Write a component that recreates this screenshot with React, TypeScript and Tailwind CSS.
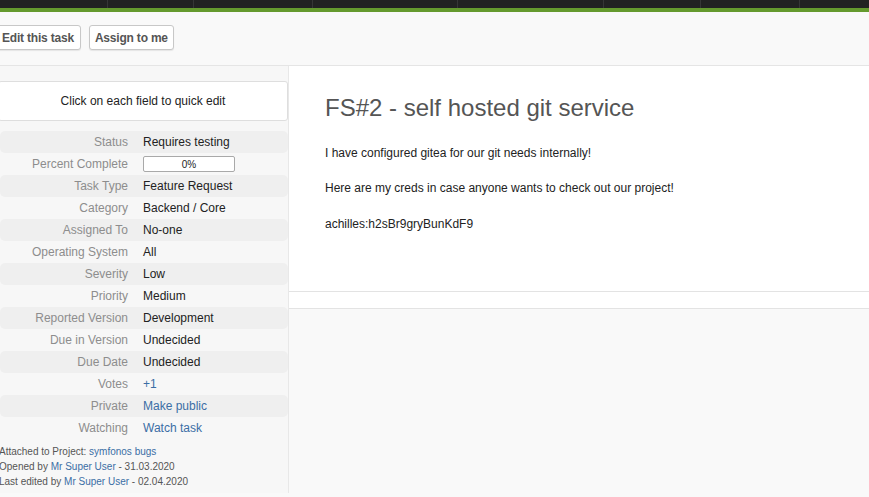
import React from 'react';

const navWidths = [107, 86, 119, 145, 146, 97, 99, 70];

interface Field {
  label: string;
  value: string;
  link?: boolean;
  progress?: boolean;
}

const fields: Field[] = [
  { label: 'Status', value: 'Requires testing' },
  { label: 'Percent Complete', value: '0%', progress: true },
  { label: 'Task Type', value: 'Feature Request' },
  { label: 'Category', value: 'Backend / Core' },
  { label: 'Assigned To', value: 'No-one' },
  { label: 'Operating System', value: 'All' },
  { label: 'Severity', value: 'Low' },
  { label: 'Priority', value: 'Medium' },
  { label: 'Reported Version', value: 'Development' },
  { label: 'Due in Version', value: 'Undecided' },
  { label: 'Due Date', value: 'Undecided' },
  { label: 'Votes', value: '+1', link: true },
  { label: 'Private', value: 'Make public', link: true },
  { label: 'Watching', value: 'Watch task', link: true },
];

export default function App() {
  return (
    <div className="w-[869px] h-[497px] overflow-hidden bg-[#f9f9f9] font-['Liberation_Sans',Arial,sans-serif] text-[12px] text-[#222]">
      {/* top nav */}
      <div className="flex h-[8px] bg-[#222]">
        {navWidths.map((w, i) => (
          <div key={i} className={`h-full shrink-0 ${i > 0 ? 'border-l border-[#363636]' : ''}`} style={{ width: w }} />
        ))}
      </div>
      <div className="h-[4px] bg-[#659a2e]" />

      {/* action buttons */}
      <div className="flex items-start gap-[8px] h-[54px] pt-[13px] border-b border-[#e5e5e5] -ml-[5px]">
        <button className="h-[25px] px-[6px] bg-white border border-[#c8c8c8] rounded-[3px] shadow-[0_1px_1px_rgba(0,0,0,0.08)] font-bold text-[#555] leading-none tracking-[-0.2px]">
          Edit this task
        </button>
        <button className="h-[25px] px-[5px] bg-white border border-[#c8c8c8] rounded-[3px] shadow-[0_1px_1px_rgba(0,0,0,0.08)] font-bold text-[#555] leading-none tracking-[-0.2px]">
          Assign to me
        </button>
      </div>

      <div className="flex">
        {/* left panel */}
        <div className="w-[289px] shrink-0 h-[427px] border-r border-[#e8e8e8] bg-[#f7f7f7]">
          <div className="mt-[15px] -ml-[2px] w-[290px] h-[40px] bg-white border border-[#dedede] rounded-[3px] flex items-center justify-center">
            Click on each field to quick edit
          </div>

          <div className="mt-[10px]">
            {fields.map((f, i) => (
              <div
                key={f.label}
                className={`flex items-center h-[22px] rounded-[5px] ${i % 2 === 0 ? 'bg-[#efefef]' : ''}`}
              >
                <div className="w-[128px] text-right text-[#8d8d8d]">{f.label}</div>
                <div className="pl-[15px]">
                  {f.progress ? (
                    <div className="w-[92px] h-[16px] bg-white border border-[#a9a9a9] rounded-[2px] flex items-center justify-center text-[10px] text-[#222]">
                      {f.value}
                    </div>
                  ) : (
                    <span className={f.link ? 'text-[#3b6ea5]' : ''}>{f.value}</span>
                  )}
                </div>
              </div>
            ))}
          </div>

          <div className="mt-[5px] -ml-[1px] text-[10px] leading-[15px] text-[#555]">
            <div>
              Attached to Project: <span className="text-[#3b6ea5]">symfonos bugs</span>
            </div>
            <div>
              Opened by <span className="text-[#3b6ea5]">Mr Super User</span> - 31.03.2020
            </div>
            <div>
              Last edited by <span className="text-[#3b6ea5]">Mr Super User</span> - 02.04.2020
            </div>
          </div>
        </div>

        {/* main */}
        <div className="flex-1">
          <div className="h-[225px] bg-white pt-[28px] px-[36px]">
            <h1 className="text-[24px] leading-[28px] text-[#555] font-normal">FS#2 - self hosted git service</h1>
            <p className="mt-[22px] leading-[18px]">I have configured gitea for our git needs internally!</p>
            <p className="mt-[17px] leading-[18px]">Here are my creds in case anyone wants to check out our project!</p>
            <p className="mt-[18px] leading-[18px]">achilles:h2sBr9gryBunKdF9</p>
          </div>
          <div className="h-[18px] bg-white border-y border-[#e3e3e3]" />
        </div>
      </div>
    </div>
  );
}
